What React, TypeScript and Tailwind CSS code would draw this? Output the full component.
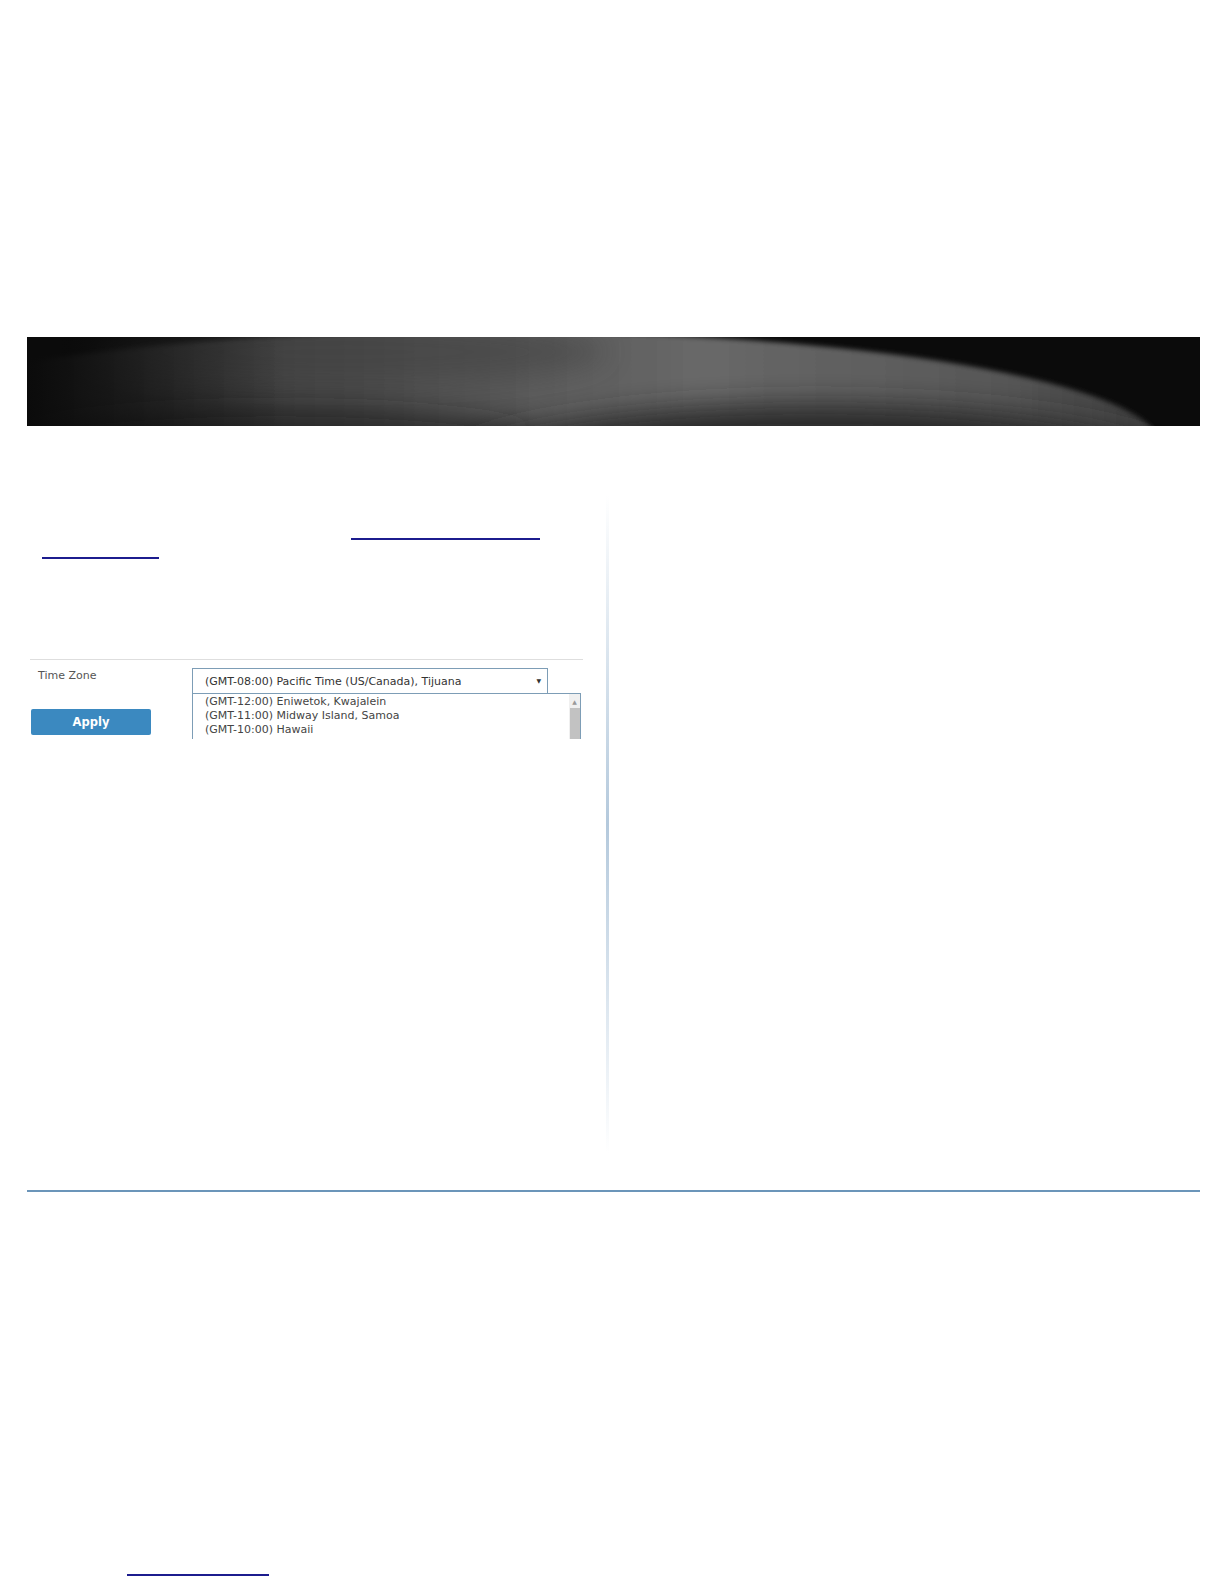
import React from "react";

const zones = [
  "(GMT-12:00) Eniwetok, Kwajalein",
  "(GMT-11:00) Midway Island, Samoa",
  "(GMT-10:00) Hawaii",
];

function Banner() {
  return (
    <div className="h-[89px] w-full overflow-hidden bg-[#0b0b0b]">
      <svg viewBox="0 0 1176 89" preserveAspectRatio="none" className="h-full w-full">
        <defs>
          <linearGradient id="sweep" x1="0" y1="0" x2="1" y2="0">
            <stop offset="0" stopColor="#161616" />
            <stop offset="0.22" stopColor="#333" />
            <stop offset="0.45" stopColor="#525252" />
            <stop offset="0.66" stopColor="#686868" />
            <stop offset="0.88" stopColor="#575757" />
            <stop offset="1" stopColor="#3c3c3c" />
          </linearGradient>
          <linearGradient id="leftfade" x1="0" y1="0" x2="1" y2="0">
            <stop offset="0" stopColor="#0b0b0b" stopOpacity="1" />
            <stop offset="1" stopColor="#0b0b0b" stopOpacity="0" />
          </linearGradient>
          <filter id="soft" x="-20%" y="-50%" width="140%" height="200%">
            <feGaussianBlur stdDeviation="2.5" />
          </filter>
          <filter id="softer" x="-20%" y="-80%" width="140%" height="260%">
            <feGaussianBlur stdDeviation="14" />
          </filter>
        </defs>
        <ellipse cx="461" cy="110" rx="676" ry="116" fill="url(#sweep)" filter="url(#soft)" />
        <ellipse cx="320" cy="15" rx="260" ry="30" fill="#404040" opacity="0.5" filter="url(#softer)" />
        <ellipse cx="250" cy="100" rx="260" ry="30" fill="#151515" opacity="0.6" filter="url(#softer)" />
        <ellipse cx="790" cy="140" rx="380" ry="72" fill="#2c2c2c" filter="url(#softer)" />
        <rect x="0" y="0" width="260" height="89" fill="url(#leftfade)" />
      </svg>
    </div>
  );
}

function TimeZoneForm() {
  return (
    <div className="flex font-['DejaVu_Sans',sans-serif] text-[11px] leading-[13px]">
      <div className="w-[161px] shrink-0">
        <div className="ml-[7px] mt-[9px] text-[#555]">Time Zone</div>
        <button className="mt-[27px] h-[26px] w-[120px] rounded-[2px] bg-[#3b89c0] text-[11.5px] font-bold text-white">
          Apply
        </button>
      </div>
      <div className="mt-[8px] w-[389px]">
        <div className="flex h-[26px] w-[356px] items-center justify-between border border-[#7d9db6] bg-white pl-[12px] pr-[6px] text-[#333]">
          <span>(GMT-08:00) Pacific Time (US/Canada), Tijuana</span>
          <span className="text-[6px] leading-none text-[#333]">▼</span>
        </div>
        <div className="-mt-px flex h-[46px] border-x border-t border-[#7d9db6] bg-white">
          <div className="flex-1 pl-[12px] pt-[1px] leading-[14px] text-[#444]">
            {zones.map((z) => (
              <div key={z}>{z}</div>
            ))}
          </div>
          <div className="flex w-[11px] flex-col items-center bg-[#f0f0f0]">
            <span className="mt-[4px] text-[6px] leading-[8px] text-[#999]">▲</span>
            <div className="mt-[2px] w-[10px] flex-1 bg-[#c2c2c2]" />
          </div>
        </div>
      </div>
    </div>
  );
}

export default function App() {
  return (
    <div className="h-[1584px] w-[1224px] bg-white">
      <div className="pl-[27px] pr-[24px] pt-[337px]">
        <Banner />
        <div className="flex h-[764px]">
          <div className="w-[578px] shrink-0">
            <div className="ml-[324px] mt-[112px] h-[2px] w-[189px] bg-[#1c1c8e]" />
            <div className="ml-[15px] mt-[17px] h-[2px] w-[117px] bg-[#1c1c8e]" />
            <div className="ml-[3px] mt-[100px] h-px w-[553px] bg-[#dedede]" />
            <div className="ml-[4px]">
              <TimeZoneForm />
            </div>
          </div>
          <div className="ml-[1px] mt-[69px] h-[658px] w-[3px] bg-linear-to-b from-white via-[#b4c9dc] to-white" />
        </div>
        <div className="h-[2px] w-full bg-[#6b95b9]" />
        <div className="ml-[100px] mt-[382px] h-[2px] w-[142px] bg-[#1c1c8e]" />
      </div>
    </div>
  );
}
